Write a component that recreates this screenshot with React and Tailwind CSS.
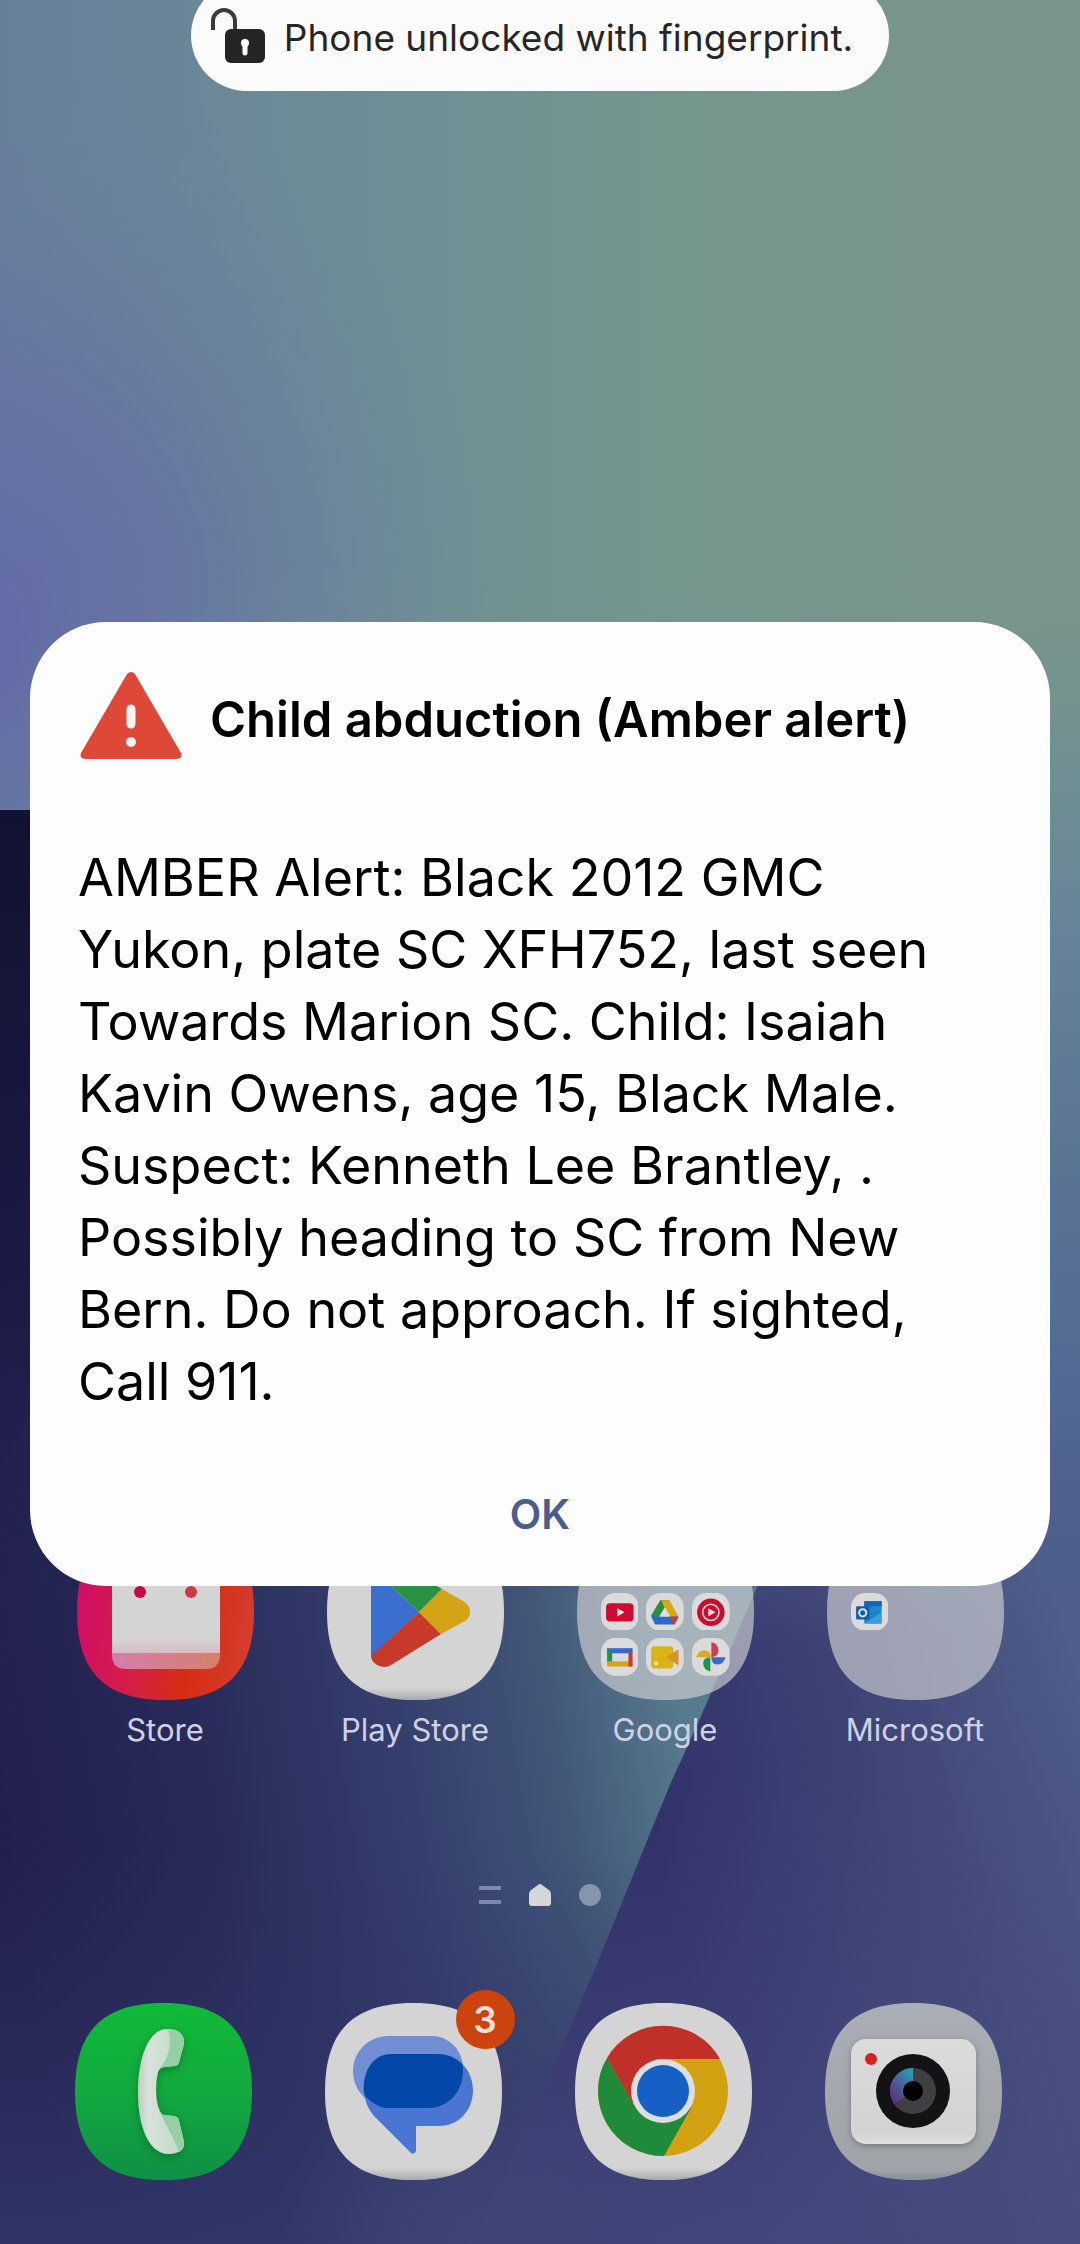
const SQUIRCLE =
  "M0 88.5C0 28 28 0 88.5 0S177 28 177 88.5 149 177 88.5 177 0 149 0 88.5Z";

const RIDGE = "M840 1400C780 1530 710 1700 672 1780C620 1905 550 2090 470 2244H1080V1400Z";

function Wallpaper() {
  return (
    <svg
      className="absolute inset-0 h-full w-full"
      viewBox="0 0 1080 2244"
      preserveAspectRatio="none"
      aria-hidden="true"
    >
      <defs>
        <linearGradient id="sky" x1="0" y1="0" x2="1" y2="0">
          <stop offset="0" stopColor="#687f9b" />
          <stop offset="0.4" stopColor="#6f8f95" />
          <stop offset="0.62" stopColor="#75968d" />
          <stop offset="1" stopColor="#7b948a" />
        </linearGradient>
        <radialGradient
          id="violet"
          gradientUnits="userSpaceOnUse"
          cx="0"
          cy="0"
          r="1"
          gradientTransform="translate(-20 640) scale(520 600)"
        >
          <stop offset="0" stopColor="#636aa8" />
          <stop offset="0.4" stopColor="#6570a6" stopOpacity="0.7" />
          <stop offset="1" stopColor="#6a829c" stopOpacity="0" />
        </radialGradient>
        <linearGradient id="edge" gradientUnits="userSpaceOnUse" x1="0" y1="560" x2="0" y2="1700">
          <stop offset="0" stopColor="#75938f" stopOpacity="0" />
          <stop offset="0.2" stopColor="#6f8e93" />
          <stop offset="0.34" stopColor="#66829a" />
          <stop offset="0.5" stopColor="#5c7694" />
          <stop offset="0.74" stopColor="#526894" />
          <stop offset="0.9" stopColor="#4e5e8b" />
        </linearGradient>
        <linearGradient id="navy" gradientUnits="userSpaceOnUse" x1="0" y1="1860" x2="690" y2="1740">
          <stop offset="0" stopColor="#211f4e" />
          <stop offset="0.3" stopColor="#282a59" />
          <stop offset="0.6" stopColor="#353f6e" />
          <stop offset="0.8" stopColor="#415577" />
          <stop offset="1" stopColor="#577b8e" />
        </linearGradient>
        <linearGradient id="navyTop" gradientUnits="userSpaceOnUse" x1="0" y1="810" x2="0" y2="1600">
          <stop offset="0" stopColor="#131130" />
          <stop offset="0.6" stopColor="#191742" stopOpacity="0.8" />
          <stop offset="1" stopColor="#211f4e" stopOpacity="0" />
        </linearGradient>
        <linearGradient id="navyBottom" gradientUnits="userSpaceOnUse" x1="0" y1="1850" x2="0" y2="2244">
          <stop offset="0" stopColor="#333769" stopOpacity="0" />
          <stop offset="1" stopColor="#34396c" stopOpacity="0.8" />
        </linearGradient>
        <linearGradient id="dusk" gradientUnits="userSpaceOnUse" x1="640" y1="1800" x2="1080" y2="1680">
          <stop offset="0" stopColor="#313169" />
          <stop offset="0.5" stopColor="#3e4375" />
          <stop offset="1" stopColor="#4e5d89" />
        </linearGradient>
        <linearGradient id="duskTop" gradientUnits="userSpaceOnUse" x1="0" y1="1400" x2="0" y2="1640">
          <stop offset="0" stopColor="#526894" />
          <stop offset="1" stopColor="#4e5e8b" stopOpacity="0" />
        </linearGradient>
        <linearGradient id="duskBottom" gradientUnits="userSpaceOnUse" x1="620" y1="1800" x2="740" y2="2244">
          <stop offset="0" stopColor="#4a4d80" stopOpacity="0" />
          <stop offset="1" stopColor="#494d80" stopOpacity="0.75" />
        </linearGradient>
        <radialGradient id="fold" gradientUnits="userSpaceOnUse" cx="490" cy="2260" r="220">
          <stop offset="0" stopColor="#404578" />
          <stop offset="0.3" stopColor="#3f4477" stopOpacity="0.9" />
          <stop offset="1" stopColor="#3c4375" stopOpacity="0" />
        </radialGradient>
      </defs>
      <rect width="1080" height="2244" fill="url(#sky)" />
      <rect y="560" width="1080" height="1684" fill="url(#edge)" />
      <rect width="1080" height="810" fill="url(#violet)" />
      <path d="M0 810H860V2244H0Z" fill="url(#navy)" />
      <path d="M0 810H860V1600H0Z" fill="url(#navyTop)" />
      <path d="M0 1850H700V2244H0Z" fill="url(#navyBottom)" />
      <path d={RIDGE} fill="url(#dusk)" />
      <path d={RIDGE} fill="url(#duskTop)" />
      <path d={RIDGE} fill="url(#duskBottom)" />
      <rect x="240" y="2010" width="500" height="234" fill="url(#fold)" />
    </svg>
  );
}

function Squircle({ fill, children }) {
  return (
    <svg className="size-[177px]" viewBox="0 0 177 177" aria-hidden="true">
      <path d={SQUIRCLE} fill={fill} />
      {children}
    </svg>
  );
}

function StoreIcon() {
  return (
    <Squircle fill="url(#storeBg)">
      <defs>
        <linearGradient id="storeBg" x1="0" y1="0.3" x2="1" y2="0.5">
          <stop offset="0" stopColor="#cf0d68" />
          <stop offset="0.4" stopColor="#d51e48" />
          <stop offset="0.7" stopColor="#d62c14" />
          <stop offset="1" stopColor="#d53c2e" />
        </linearGradient>
        <linearGradient id="storeStrip">
          <stop offset="0" stopColor="#d67cae" />
          <stop offset="1" stopColor="#d38068" />
        </linearGradient>
        <linearGradient id="storeBag" x1="0" y1="0" x2="0" y2="1">
          <stop offset="0.85" stopColor="#d4d4d4" />
          <stop offset="1" stopColor="#dcb9c2" />
        </linearGradient>
      </defs>
      <path d="M35 128H143V132Q143 146 129 146H49Q35 146 35 132Z" fill="url(#storeStrip)" />
      <path d="M35 40H143V130H35Z" fill="url(#storeBag)" />
      <circle cx="63" cy="69" r="6" fill="#c4084f" />
      <circle cx="114" cy="69" r="6" fill="#c93a48" />
    </Squircle>
  );
}

function WhiteSheen() {
  return (
    <>
      <defs>
        <linearGradient id="sheen" x1="0" y1="0" x2="0" y2="1">
          <stop offset="0.93" stopColor="#8d8f96" stopOpacity="0" />
          <stop offset="1" stopColor="#8d8f96" stopOpacity="0.6" />
        </linearGradient>
      </defs>
      <path d={SQUIRCLE} fill="url(#sheen)" />
    </>
  );
}

function PlayIcon() {
  return (
    <Squircle fill="#d4d4d4">
      <WhiteSheen />
      <path d="M44 44V134L92 89Z" fill="#3a6fd0" />
      <path d="M44 44Q48 32 62 36L115 66L92 89Z" fill="#2a9242" />
      <path d="M44 133L92 89L114 111L64 142Q58 146 50 142Q44 138 44 133Z" fill="#c73a2a" />
      <path d="M92 89L115 66L136 78Q143 82 143 89T136 99L114 111Z" fill="#d4a215" />
    </Squircle>
  );
}

function PhoneIcon() {
  return (
    <Squircle fill="url(#phoneBg)">
      <defs>
        <linearGradient id="phoneBg" x1="0" y1="0" x2="0" y2="1">
          <stop offset="0" stopColor="#10bb38" />
          <stop offset="0.5" stopColor="#12a940" />
          <stop offset="1" stopColor="#109046" />
        </linearGradient>
        <linearGradient id="handset" gradientUnits="userSpaceOnUse" x1="63" y1="0" x2="100" y2="0">
          <stop offset="0" stopColor="#bccfc2" />
          <stop offset="0.3" stopColor="#d8e2da" />
          <stop offset="1" stopColor="#c3dcc9" />
        </linearGradient>
        <filter id="phoneShadow" x="-40%" y="-20%" width="180%" height="140%">
          <feDropShadow dx="0" dy="3" stdDeviation="5" floodColor="#064e1c" floodOpacity="0.45" />
        </filter>
      </defs>
      <path
        filter="url(#phoneShadow)"
        fill="url(#handset)"
        d="M92 26C74 26 63 54 63 89C63 124 74 151 94 151C104 151 110 146 109 139L104 118Q103 113 98 113L90 112Q86 112 84 106Q81 98 81 87Q81 77 83 69Q85 64 90 64L99 63Q103 63 104 59L109 41C110 31 103 26 92 26Z"
      />
      <path fill="#95cfa4" d="M93 27C98 42 92 57 85 65Q87 64 90 64L99 63Q103 63 104 59L109 41C110 32 104 27 93 27Z" />
      <path fill="#95cfa4" d="M84 107C90 121 101 139 104 149C108 147 110 143 109 139L104 118Q103 113 98 113L90 112Q86 112 84 107Z" />
    </Squircle>
  );
}

function MessagesIcon() {
  return (
    <Squircle fill="#d4d4d4">
      <WhiteSheen />
      <path fill="#718dd3" d="M64 33H106C123 33 138 46 138 66C138 90 120 105 104 105H60C50 105 28 92 28 68C28 48 44 33 64 33Z" />
      <path
        fill="#4a75d2"
        d="M66 51H113C132 51 148 66 148 87C148 108 133 123 114 123H92Q91 123 91 124V148Q89 152 86 150L50 114C43 106 39 98 39 84C39 64 52 51 66 51Z"
      />
      <path
        fill="#0348a9"
        d="M66 51H113Q127 51 137 61Q138 64 138 67C138 90 122 105 104 105H60Q50 103 40 93Q38 88 39 80C41 62 52 51 66 51Z"
      />
    </Squircle>
  );
}

function ChromeIcon() {
  return (
    <Squircle fill="#d4d4d4">
      <WhiteSheen />
      <circle cx="88" cy="88" r="65" fill="#d2a112" />
      <path d="M88 56H145A65 65 0 0 0 32 55L60 104L88 88Z" fill="#c13028" />
      <path d="M32 55A65 65 0 0 0 89 153L116 105L88 88L60 104Z" fill="#1f8a3a" />
      <circle cx="88" cy="88" r="32" fill="#dcdfe2" />
      <circle cx="88" cy="88" r="26" fill="#175fc4" />
    </Squircle>
  );
}

function CameraIcon() {
  return (
    <Squircle fill="url(#camBg)">
      <defs>
        <linearGradient id="camBg" x1="0" y1="0" x2="0" y2="1">
          <stop offset="0" stopColor="#aaafb5" />
          <stop offset="0.94" stopColor="#a0a3a8" />
          <stop offset="1" stopColor="#8a8d98" />
        </linearGradient>
        <linearGradient id="camBody" x1="0" y1="0" x2="0" y2="1">
          <stop offset="0" stopColor="#dbdbdb" />
          <stop offset="0.9" stopColor="#d3d3d3" />
          <stop offset="1" stopColor="#e0e0e0" />
        </linearGradient>
        <linearGradient id="camFlare" x1="1" y1="0" x2="0.3" y2="1">
          <stop offset="0" stopColor="#1ea8b8" />
          <stop offset="0.5" stopColor="#4468a0" />
          <stop offset="1" stopColor="#5a3578" />
        </linearGradient>
        <filter id="camShadow" x="-20%" y="-20%" width="140%" height="140%">
          <feDropShadow dx="0" dy="2" stdDeviation="3" floodColor="#44464c" floodOpacity="0.5" />
        </filter>
      </defs>
      <rect x="26" y="36" width="125" height="105" rx="15" fill="url(#camBody)" filter="url(#camShadow)" />
      <circle cx="46" cy="56" r="6" fill="#d8201f" />
      <circle cx="88" cy="88" r="37" fill="#131315" />
      <circle cx="88" cy="88" r="23" fill="#404043" />
      <path d="M88 65A23 23 0 0 0 69 101L88 88Z" fill="url(#camFlare)" />
      <circle cx="88" cy="88" r="10" fill="#000" />
    </Squircle>
  );
}

const minis = {
  youtube: (
    <>
      <rect x="5" y="10" width="27" height="18" rx="4" fill="#cf0a35" />
      <path d="M16 15V23L23 19Z" fill="#eee" />
    </>
  ),
  drive: (
    <>
      <path d="M14 7H23L16 18.5L10 30L5 22Z" fill="#26903f" />
      <path d="M15 7H23L32 23H23L18.5 15Z" fill="#d8a913" />
      <path d="M10 23H32L28 31H9L5 23Z" fill="#2f68cc" />
      <path d="M23 23H32L28 31Z" fill="#cc3a2b" />
      <path d="M18.5 14L24 23H13Z" fill="#dedede" />
    </>
  ),
  music: (
    <>
      <circle cx="18.5" cy="19" r="13.5" fill="#cd0b2e" />
      <circle cx="18.5" cy="19" r="8" fill="none" stroke="#e8d8da" strokeWidth="1.5" />
      <path d="M16 15V23L23 19Z" fill="#e8e0e0" />
    </>
  ),
  tv: (
    <>
      <path d="M6 23H31V28H6Z" fill="#d2a416" />
      <path d="M6 10H31V15H6Z" fill="#3369cc" />
      <path d="M6 10L11 14V23H6Z" fill="#239244" />
      <path d="M27 14H31V28H27Z" fill="#cb3b2b" />
    </>
  ),
  meet: (
    <>
      <rect x="5" y="8" width="22" height="22" rx="4" fill="#d9b415" />
      <path d="M20 19L32 11V27Z" fill="#d4932c" />
      <circle cx="10" cy="25" r="2" fill="#f2e7b0" />
    </>
  ),
  photos: (
    <>
      <path d="M19 19V4Q26 6 26 12T19 19Z" fill="#d23a55" />
      <path d="M19 19H33Q31 26 25 26T19 19Z" fill="#3b69cf" />
      <path d="M18 19V33Q11 31 11 25T18 19Z" fill="#1f9650" />
      <path d="M19 19H4Q6 12 12 12T19 19Z" fill="#d6ad22" />
    </>
  ),
  outlook: (
    <>
      <rect x="13" y="8" width="17" height="22" rx="1" fill="#1f83c6" />
      <path d="M21 8H30V18H21Z" fill="#2489ca" />
      <path d="M13 8H30V13H13Z" fill="#1268b4" />
      <path d="M13 30L30 19V30Z" fill="#35a0dc" />
      <rect x="5" y="13" width="13" height="13" rx="1" fill="#0d5fae" />
      <circle cx="11.5" cy="19.5" r="3.5" fill="none" stroke="#dfe6ee" strokeWidth="2" />
    </>
  ),
};

function Folder({ items }) {
  return (
    <div className="relative size-[177px] p-6">
      <svg className="absolute inset-0 size-full" viewBox="0 0 177 177" aria-hidden="true">
        <path d={SQUIRCLE} fill="#d1d1d4" fillOpacity="0.65" />
      </svg>
      <div className="relative grid h-full grid-cols-3 grid-rows-3 gap-2">
        <span className="col-span-3" />
        {items.map((name) => (
          <svg key={name} className="size-full" viewBox="0 0 37 37" aria-hidden="true">
            <rect width="37" height="37" rx="14" fill="#dbdbdd" />
            {minis[name]}
          </svg>
        ))}
      </div>
    </div>
  );
}

const apps = [
  { label: "Store", icon: <StoreIcon /> },
  { label: "Play Store", icon: <PlayIcon /> },
  { label: "Google", icon: <Folder items={["youtube", "drive", "music", "tv", "meet", "photos"]} /> },
  { label: "Microsoft", icon: <Folder items={["outlook"]} /> },
];

const dock = [
  { label: "Phone", icon: <PhoneIcon /> },
  { label: "Messages", icon: <MessagesIcon />, badge: 3 },
  { label: "Chrome", icon: <ChromeIcon /> },
  { label: "Camera", icon: <CameraIcon /> },
];

function HomeScreen() {
  return (
    <main className="relative flex min-h-screen flex-col justify-end pb-16">
      <div className="grid grid-cols-4 px-10">
        {apps.map((app) => (
          <button key={app.label} type="button" className="flex flex-col items-center gap-2.5">
            {app.icon}
            <span className="text-[31px] leading-10 text-[#ced2e2]">{app.label}</span>
          </button>
        ))}
      </div>
      <nav className="mt-[134px] flex items-center justify-center gap-7" aria-label="Home pages">
        <button type="button" aria-label="Feed" className="flex w-[22px] flex-col gap-2.5">
          <span className="h-1 w-full bg-[#7d86b0]" />
          <span className="h-1 w-full bg-[#7d86b0]" />
        </button>
        <button type="button" aria-label="Home page">
          <svg className="size-[22px]" viewBox="0 0 22 22" aria-hidden="true">
            <path d="M9 1Q11-1 13 1L20 6Q22 8 22 10V19Q22 22 19 22H3Q0 22 0 19V10Q0 8 2 6Z" fill="#d4d6d8" />
          </svg>
        </button>
        <button type="button" aria-label="Page 2" className="size-[22px] rounded-full bg-[#8495ac]" />
      </nav>
      <div className="mt-[97px] grid grid-cols-4 pr-[42px] pl-[38px]">
        {dock.map((app) => (
          <button key={app.label} type="button" aria-label={app.label} className="flex justify-center">
            <span className="relative">
              {app.icon}
              {app.badge && (
                <span className="absolute -top-[13px] -right-[13px] flex size-[59px] items-center justify-center rounded-full bg-[#cd430d] text-[37px] font-semibold text-[#f3ded6]">
                  {app.badge}
                </span>
              )}
            </span>
          </button>
        ))}
      </div>
    </main>
  );
}

function UnlockToast() {
  return (
    <div className="absolute inset-x-0 -top-5 flex justify-center">
      <div role="status" className="flex h-[111px] items-center rounded-full bg-[#fbfbfb] pt-1 pr-9 pl-5">
        <svg className="mb-1 size-[55px]" viewBox="0 0 55 55" aria-hidden="true">
          <path d="M2 22V13A11 11 0 0 1 24 13V22" fill="none" stroke="#3a3a3b" strokeWidth="4" />
          <rect x="14" y="21" width="40" height="34" rx="6" fill="#252527" />
          <circle cx="34" cy="35" r="4" fill="#fff" />
          <path d="M34 36V45" stroke="#fff" strokeWidth="5" strokeLinecap="round" />
        </svg>
        <p className="ml-[18px] text-[37px] leading-[48px] text-[#262628]">Phone unlocked with fingerprint.</p>
      </div>
    </div>
  );
}

function AlertDialog() {
  return (
    <div className="absolute inset-0 flex items-center justify-center px-[30px] pb-9">
      <section
        role="alertdialog"
        aria-labelledby="alert-title"
        aria-describedby="alert-body"
        className="flex w-full flex-col rounded-[76px] bg-[#fdfdfe] px-12 pt-[50px] pb-9 text-black"
      >
        <header className="flex items-center gap-7">
          <svg className="h-[88px] w-[104px]" viewBox="0 0 104 88" aria-hidden="true">
            <path d="M49 2Q53-2 57 2L103 81Q105 87 98 87H8Q1 87 3 81Z" fill="#dd4837" />
            <path d="M53 37V52" stroke="#fdf4f2" strokeWidth="9" strokeLinecap="round" />
            <circle cx="53" cy="70" r="5" fill="#fdf4f2" />
          </svg>
          <h1 id="alert-title" className="pt-2 text-[49px] leading-[72px] font-semibold">
            Child abduction (Amber alert)
          </h1>
        </header>
        <p id="alert-body" className="mt-[82px] pr-8 text-[52px] leading-[72px]">
          AMBER Alert: Black 2012 GMC Yukon, plate SC XFH752, last seen Towards Marion SC. Child: Isaiah
          Kavin Owens, age 15, Black Male. Suspect: Kenneth Lee Brantley, . Possibly heading to SC from
          New Bern. Do not approach. If sighted, Call 911.
        </p>
        <button type="button" className="mt-[60px] self-center px-12 text-[41px] leading-[72px] font-semibold text-[#4c5d8c]">
          OK
        </button>
      </section>
    </div>
  );
}

export default function App() {
  return (
    <div className="relative min-h-screen overflow-hidden font-['Inter',sans-serif]">
      <Wallpaper />
      <HomeScreen />
      <UnlockToast />
      <AlertDialog />
    </div>
  );
}
